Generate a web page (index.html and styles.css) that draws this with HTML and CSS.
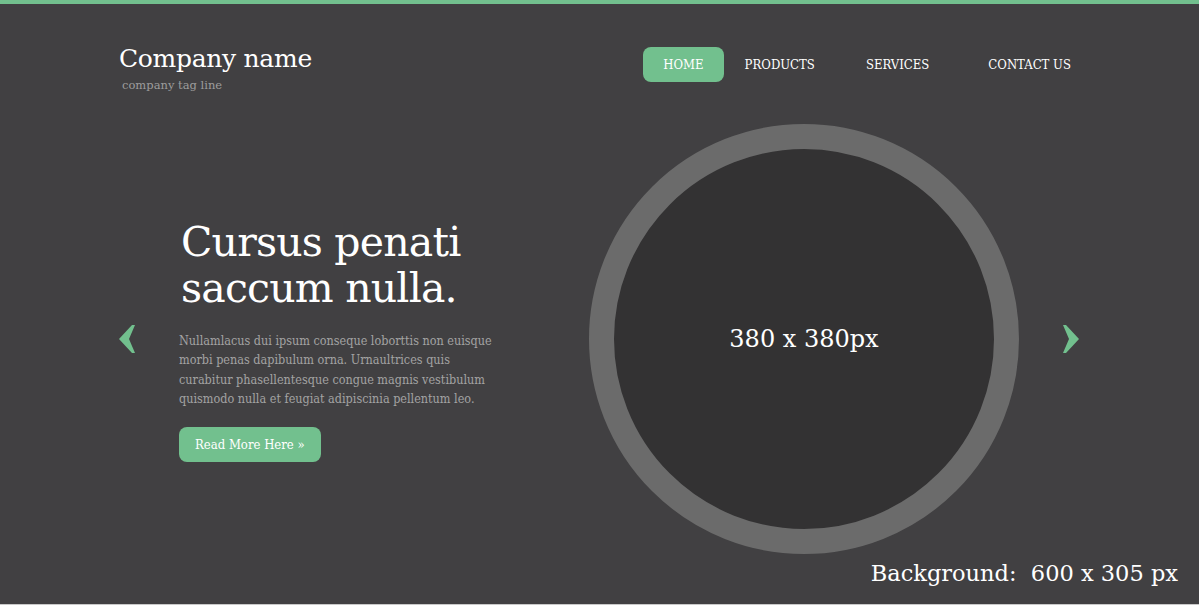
FILE: index.html
```html
<!DOCTYPE html>
<html>
<head>
<meta charset="utf-8">
<link rel="stylesheet" href="styles.css">
</head>
<body>
<div class="page">
  <div class="wrap">
    <header class="header">
      <div class="brand">
        <div class="brand-name">Company name</div>
        <div class="brand-tag">company tag line</div>
      </div>
      <nav class="nav">
        <a class="nav-link active" href="#">HOME</a>
        <a class="nav-link nav-products" href="#">PRODUCTS</a>
        <a class="nav-link nav-services" href="#">SERVICES</a>
        <a class="nav-link nav-contact" href="#">CONTACT US</a>
      </nav>
    </header>
    <section class="hero">
      <a class="arrow arrow-left" href="#">
        <svg width="16" height="28" viewBox="0 0 16 28"><polygon points="16,0 13,0 0,14 13,28 16,28 10,14" fill="#72c08e"/></svg>
      </a>
      <div class="hero-text">
        <h1 class="hero-title">Cursus penati<br>saccum nulla.</h1>
        <p class="hero-copy">Nullamlacus dui ipsum conseque loborttis non euisque morbi penas dapibulum orna. Urnaultrices quis curabitur phasellentesque congue magnis vestibulum quismodo nulla et feugiat adipiscinia pellentum leo.</p>
        <a class="btn" href="#">Read More Here »</a>
      </div>
      <div class="circle">
        <div class="circle-inner">380 x 380px</div>
      </div>
      <a class="arrow arrow-right" href="#">
        <svg width="16" height="28" viewBox="0 0 16 28"><polygon points="0,0 3,0 16,14 3,28 0,28 6,14" fill="#72c08e"/></svg>
      </a>
    </section>
  </div>
  <div class="caption">Background:&nbsp; 600 x 305 px</div>
</div>
</body>
</html>
```

FILE: styles.css
```css
html, body {
  margin: 0;
  padding: 0;
  background: #414042;
}

.page {
  border-top: 4px solid #72c08e;
  border-bottom: 1px solid #c9c9c9;
  height: 600px;
  background: #414042;
  color: #fff;
  font-family: "DejaVu Serif", Georgia, serif;
  display: flex;
  flex-direction: column;
}

.wrap {
  width: 961px;
  margin: 0 auto;
}

.header {
  display: flex;
  justify-content: space-between;
  align-items: flex-start;
  height: 120px;
}

.brand {
  padding-top: 40px;
}

.brand-name {
  font-size: 25px;
  line-height: 30px;
  color: #fff;
  letter-spacing: -0.3px;
}

.brand-tag {
  font-size: 11.5px;
  line-height: 14px;
  margin-top: 4px;
  color: #9d9d9d;
  margin-left: 3px;
}

.nav {
  display: flex;
  align-items: center;
  padding-top: 43px;
  margin-right: -11px;
}

.nav-link {
  display: block;
  color: #fff;
  text-decoration: none;
  font-size: 13px;
  font-stretch: condensed;
  line-height: 35px;
  height: 35px;
  padding: 0 20px;
  border-radius: 8px;
}

.nav-products {
  margin-left: 1px;
}

.nav-services {
  margin-left: 11px;
}

.nav-contact {
  margin-left: 19px;
}

.nav-link.active {
  background: #72c08e;
}

.hero {
  display: flex;
  align-items: center;
  height: 430px;
}

.arrow {
  display: flex;
  width: 16px;
  height: 28px;
}

.arrow-left {
  margin-right: 44px;
}

.arrow-right {
  margin-left: 44px;
}

.hero-text {
  width: 410px;
  align-self: flex-start;
  padding-top: 95px;
}

.hero-title {
  margin: 0 0 0 2px;
  font-weight: normal;
  font-size: 41px;
  line-height: 46px;
  letter-spacing: -0.8px;
  color: #fff;
}

.hero-copy {
  margin: 20px 0 0;
  width: 320px;
  font-size: 12.5px;
  line-height: 19.4px;
  color: #a3a3a3;
  font-stretch: condensed;
}

.btn {
  display: inline-block;
  margin-top: 18px;
  height: 35px;
  line-height: 35px;
  padding: 0 16px;
  background: #72c08e;
  border-radius: 8px;
  color: #fff;
  text-decoration: none;
  font-size: 13px;
  font-stretch: condensed;
}

.circle {
  width: 380px;
  height: 380px;
  border: 25px solid #6b6b6b;
  border-radius: 50%;
  background: #333233;
  flex-shrink: 0;
}

.circle-inner {
  height: 100%;
  display: flex;
  align-items: center;
  justify-content: center;
  font-size: 24px;
  color: #fff;
}

.caption {
  text-align: right;
  padding-right: 21px;
  margin-top: 4px;
  font-size: 22.5px;
  line-height: 30px;
  color: #fff;
}
```
